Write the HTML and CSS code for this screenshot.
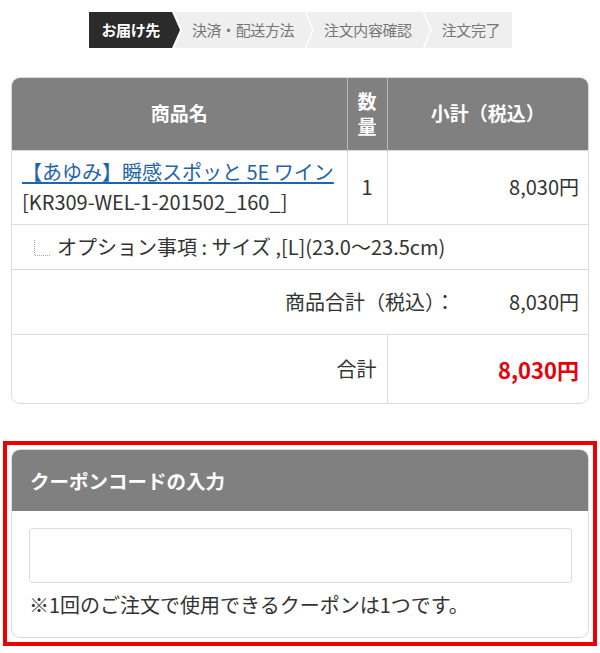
FILE: index.html
```html
<!DOCTYPE html>
<html lang="ja">
<head>
<meta charset="utf-8">
<title>カート</title>
<link rel="stylesheet" href="styles.css">
</head>
<body>
<div class="page">
  <ol class="steps">
    <li class="step active">お届け先</li>
    <li class="sep"><svg width="10" height="36" viewBox="0 0 10 36"><polygon points="0,0 8,18 0,36" fill="#2b2b2b"/><polyline points="1,-1 9.5,18 1,37" fill="none" stroke="#fff" stroke-width="1.5"/></svg></li>
    <li class="step">決済・配送方法</li>
    <li class="sep"><svg width="10" height="36" viewBox="0 0 10 36"><polyline points="1,-1 9,18 1,37" fill="none" stroke="#fff" stroke-width="1.5"/></svg></li>
    <li class="step">注文内容確認</li>
    <li class="sep"><svg width="10" height="36" viewBox="0 0 10 36"><polyline points="1,-1 9,18 1,37" fill="none" stroke="#fff" stroke-width="1.5"/></svg></li>
    <li class="step">注文完了</li>
  </ol>

  <div class="cart">
    <table class="cart-table">
      <colgroup>
        <col class="col-name">
        <col class="col-qty">
        <col class="col-sub">
      </colgroup>
      <thead>
        <tr>
          <th>商品名</th>
          <th class="th-qty">数量</th>
          <th>小計（税込）</th>
        </tr>
      </thead>
      <tbody>
        <tr class="item">
          <td class="name"><a href="#" class="item-link">【あゆみ】瞬感スポッと 5E ワイン</a><br>[KR309-WEL-1-201502_160_]</td>
          <td class="qty">1</td>
          <td class="price">8,030円</td>
        </tr>
        <tr class="option">
          <td colspan="3"><span class="opt-line"><svg class="tree" width="18" height="17" viewBox="0 0 18 17"><path d="M1.5 0 V15.5 H17" fill="none" stroke="#a8a8a8" stroke-width="1" stroke-dasharray="1 1"/></svg><span>オプション事項 : サイズ ,[L](23.0〜23.5cm)</span></span></td>
        </tr>
        <tr class="subtotal">
          <td colspan="3"><span class="sub-line"><span class="sub-label">商品合計（税込）：</span><span class="sub-amount">8,030円</span></span></td>
        </tr>
        <tr class="total">
          <td colspan="2" class="total-label">合計</td>
          <td class="total-amount">8,030円</td>
        </tr>
      </tbody>
    </table>
  </div>

  <div class="coupon-frame">
    <div class="coupon">
      <div class="coupon-head">クーポンコードの入力</div>
      <div class="coupon-body">
        <input type="text" class="coupon-input" aria-label="クーポンコード">
        <p class="coupon-note">※1回のご注文で使用できるクーポンは1つです。</p>
      </div>
    </div>
  </div>
</div>
</body>
</html>
```

FILE: styles.css
```css
* { box-sizing: border-box; }

html, body {
  margin: 0;
  padding: 0;
  background: #fff;
}

body {
  font-family: "Noto Sans CJK JP", "Noto Sans", sans-serif;
  color: #333;
  font-size: 20px;
}

.page {
  width: 600px;
  padding-top: 12px;
}

/* steps */
.steps {
  list-style: none;
  margin: 0 auto;
  padding: 0;
  display: flex;
  width: 423px;
  height: 36px;
  background: #efefef;
}

.step {
  height: 36px;
  line-height: 36px;
  padding: 0 10px;
  font-size: 15px;
  color: #777;
  white-space: nowrap;
  letter-spacing: -0.4px;
}

.step.active {
  background: #2b2b2b;
  color: #fff;
  font-weight: bold;
  padding: 0 12px 0 13px;
}

.sep {
  width: 10px;
  height: 36px;
  flex: none;
}

.sep svg { display: block; }

/* cart table */
.cart {
  margin: 29px 11px 0 11px;
  width: 578px;
  border: 1px solid #dcdcdc;
  border-radius: 9px;
  overflow: hidden;
}

.cart-table {
  width: 100%;
  border-collapse: collapse;
  table-layout: fixed;
}

.col-name { width: 335px; }
.col-qty { width: 40px; }
.col-sub { width: 201px; }

.cart-table th {
  background: #808080;
  color: #fff;
  font-weight: bold;
  font-size: 19px;
  height: 72px;
  padding: 0;
  border-left: 1px solid #b8b8b8;
  line-height: 1.3;
}

.cart-table th:first-child { border-left: none; }

.cart-table .th-qty {
  padding: 0 9px;
  word-break: break-all;
}

.cart-table td {
  border-top: 1px solid #dcdcdc;
  border-left: 1px solid #dcdcdc;
  padding: 0 10px;
  vertical-align: middle;
}

.cart-table td:first-child { border-left: none; }

.item td {
  height: 74px;
  line-height: 30px;
}

.cart-table .name {
  padding: 0 4px 0 10px;
  word-break: break-all;
}

.item-link {
  color: #1f64ad;
  text-decoration: underline;
  text-underline-offset: 2px;
  white-space: nowrap;
}

.cart-table .qty {
  text-align: center;
  padding: 0;
}

.cart-table .price {
  text-align: right;
  padding-right: 9px;
}

.option td {
  height: 45px;
  padding-left: 21px;
}

.opt-line {
  display: flex;
  align-items: center;
  gap: 6px;
  white-space: nowrap;
}

.tree {
  display: block;
  flex: none;
  margin-top: 4px;
}

.subtotal td {
  height: 65px;
  padding-right: 9px;
}

.sub-line {
  display: flex;
  justify-content: flex-end;
}

.sub-amount {
  width: 124px;
  text-align: right;
}

.total td {
  height: 69px;
}

.cart-table .total-label {
  text-align: right;
}

.cart-table .total-amount {
  text-align: right;
  color: #e8000b;
  font-weight: bold;
  font-size: 22px;
  padding-right: 9px;
}

/* coupon */
.coupon-frame {
  margin: 37px 0 0 3px;
  width: 594px;
  border: 4px solid #ee0000;
  padding: 4px;
}

.coupon {
  border: 1px solid #dcdcdc;
  border-radius: 9px;
  overflow: hidden;
}

.coupon-head {
  background: #808080;
  color: #fff;
  font-weight: bold;
  font-size: 19.5px;
  height: 61px;
  line-height: 61px;
  padding-left: 18px;
}

.coupon-body {
  padding: 17px 16px 0 17px;
  height: 126px;
}

.coupon-input {
  display: block;
  width: 100%;
  height: 55px;
  border: 1px solid #dcdcdc;
  border-radius: 3px;
  background: #fff;
  margin: 0;
}

.coupon-note {
  margin: 9px 0 0 0;
  font-size: 20px;
  line-height: 26px;
  color: #333;
}
```
